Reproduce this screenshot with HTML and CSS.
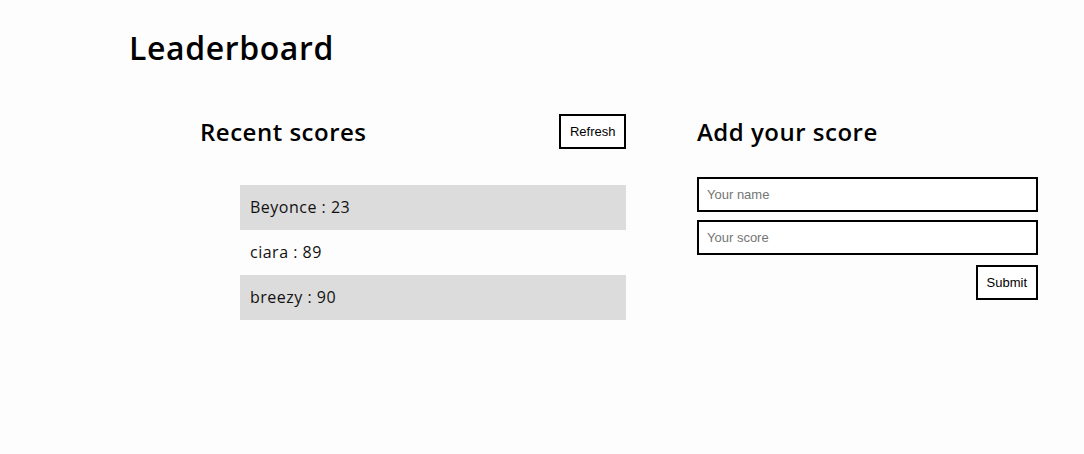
FILE: index.html
```html
<!DOCTYPE html>
<html lang="en">
<head>
<meta charset="utf-8">
<title>Leaderboard</title>
<link rel="stylesheet" href="styles.css">
</head>
<body>
<header class="page-header">
  <h1 class="title">Leaderboard</h1>
</header>
<main class="board">
  <section class="recent">
    <div class="recent-head">
      <h2 class="section-title">Recent scores</h2>
      <button class="btn" type="button">Refresh</button>
    </div>
    <ul class="scores">
      <li class="score">Beyonce : 23</li>
      <li class="score">ciara : 89</li>
      <li class="score">breezy : 90</li>
    </ul>
  </section>
  <section class="add">
    <h2 class="section-title">Add your score</h2>
    <form class="score-form">
      <input class="field" type="text" placeholder="Your name">
      <input class="field" type="text" placeholder="Your score">
      <div class="form-actions">
        <button class="btn" type="submit">Submit</button>
      </div>
    </form>
  </section>
</main>
</body>
</html>
```

FILE: styles.css
```css
* { box-sizing: border-box; }

html, body {
  margin: 0;
  padding: 0;
  background: #fdfdfd;
  color: #000;
  font-family: "Open Sans", "DejaVu Sans", sans-serif;
}

.page-header {
  padding: 24px 0 0 129px;
}

.title {
  margin: 0;
  font-size: 32px;
  font-weight: 600;
  letter-spacing: 0.6px;
  line-height: 48px;
}

.board {
  display: flex;
  gap: 71px;
  padding: 0 0 0 200px;
  margin-top: 42px;
}

.recent {
  width: 426px;
}

.recent-head {
  display: flex;
  justify-content: space-between;
  align-items: center;
  height: 35px;
}

.section-title {
  margin: 0;
  font-size: 24px;
  font-weight: 600;
  letter-spacing: 0.5px;
  line-height: 35px;
}

.btn {
  font-family: "Liberation Sans", Arial, sans-serif;
  font-size: 13px;
  background: #fff;
  color: #000;
  border: 2px solid #000;
  padding: 0 8.5px;
  height: 35px;
}

.form-actions .btn {
  padding: 0 9px;
}

.scores {
  list-style: none;
  margin: 36px 0 0 40px;
  padding: 0;
}

.score {
  height: 45px;
  line-height: 45px;
  padding-left: 10px;
  font-size: 16px;
  letter-spacing: 0.5px;
  color: #111;
}

.score:nth-child(odd) {
  background: #dcdcdc;
}

.add {
  width: 341px;
}

.score-form {
  display: flex;
  flex-direction: column;
  gap: 8px;
  margin-top: 28px;
}

.field {
  height: 35px;
  border: 2px solid #000;
  padding: 0 8px;
  font-family: "Liberation Sans", Arial, sans-serif;
  font-size: 13px;
  background: #fff;
  width: 100%;
}

.field::placeholder {
  color: #757575;
}

.form-actions {
  display: flex;
  justify-content: flex-end;
  margin-top: 2px;
}
```
